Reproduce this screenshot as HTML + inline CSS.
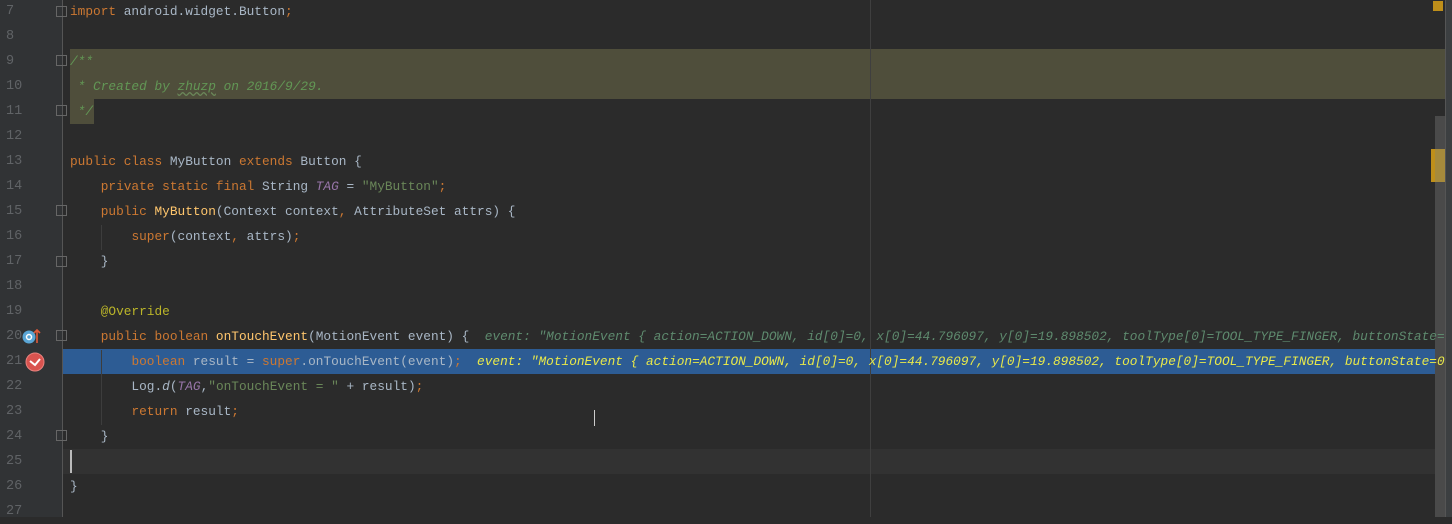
<!DOCTYPE html>
<html><head><meta charset="utf-8"><style>
*{margin:0;padding:0}
body{width:1452px;height:517px;overflow:hidden;background:#2b2b2b;position:relative;font-family:"Liberation Mono","Noto Sans CJK SC",monospace;font-size:12.8px;color:#a9b7c6}
.g{position:absolute;left:0;top:0;width:62px;height:517px;background:#313335;border-right:1px solid #3a3a3a}
.n{position:absolute;left:6px;width:20px;color:#606366;line-height:25px;font-size:13.5px}
.l{position:absolute;left:70px;white-space:pre;line-height:25px}
.k{color:#cc7832}.s{color:#6a8759}.c{color:#629755;font-style:italic}.p{color:#9876aa;font-style:italic}.a{color:#bbb529}.f{color:#ffc66d}
.h{color:#5e8a6e;font-style:italic}.hy{color:#e8e84a;font-style:italic}
.fold{position:absolute;left:56px;width:11px;height:11px;border:1px solid #666;box-sizing:border-box}
</style></head><body>
<div class="g"></div>
<div style="position:absolute;left:70px;top:49px;width:1375px;height:50px;background:#4f4e3b"></div>
<div style="position:absolute;left:70px;top:99px;width:24px;height:25px;background:#4f4e3b"></div>
<div style="position:absolute;left:62px;top:349px;width:1383px;height:25px;background:#2d5c94"></div>
<div style="position:absolute;left:62px;top:449px;width:1383px;height:25px;background:#323232"></div>
<div style="position:absolute;left:70px;top:450px;width:2px;height:23px;background:#bbb"></div>
<div style="position:absolute;left:870px;top:0;width:1px;height:517px;background:#3f3f3f"></div>
<div style="position:absolute;left:62px;top:0;width:1px;height:517px;background:#555"></div>
<div style="position:absolute;left:1435px;top:116px;width:10px;height:401px;background:#4a4a4a"></div>
<div style="position:absolute;left:1431px;top:149px;width:14px;height:33px;background:#a68a3c;border-left:4px solid #bf8f1a;box-sizing:border-box"></div>
<div style="position:absolute;left:1433px;top:1px;width:10px;height:10px;background:#bf8f1a"></div>
<div style="position:absolute;left:101px;top:225px;width:1px;height:25px;background:#3d3d3d"></div>
<div style="position:absolute;left:101px;top:350px;width:1px;height:75px;background:#3d3d3d"></div>

<div class="n" style="top:-1px">7</div><div class="n" style="top:24px">8</div><div class="n" style="top:49px">9</div><div class="n" style="top:74px">10</div><div class="n" style="top:99px">11</div><div class="n" style="top:124px">12</div><div class="n" style="top:149px">13</div><div class="n" style="top:174px">14</div><div class="n" style="top:199px">15</div><div class="n" style="top:224px">16</div><div class="n" style="top:249px">17</div><div class="n" style="top:274px">18</div><div class="n" style="top:299px">19</div><div class="n" style="top:324px">20</div><div class="n" style="top:349px">21</div><div class="n" style="top:374px">22</div><div class="n" style="top:399px">23</div><div class="n" style="top:424px">24</div><div class="n" style="top:449px">25</div><div class="n" style="top:474px">26</div><div class="n" style="top:499px">27</div>

<div class="fold" style="top:6px"></div><div class="fold" style="top:55px"></div><div class="fold" style="top:105px"></div><div class="fold" style="top:205px"></div><div class="fold" style="top:256px"></div><div class="fold" style="top:330px"></div><div class="fold" style="top:430px"></div>

<svg style="position:absolute;left:20px;top:327px" width="22" height="18"><circle cx="9" cy="10" r="6.5" fill="#5aa6d6"/><circle cx="9" cy="10" r="2.5" fill="none" stroke="#fff" stroke-width="1.5"/><path d="M17 16V3M14 6l3-3 3 3" stroke="#e05a3a" stroke-width="1.6" fill="none"/></svg>
<svg style="position:absolute;left:24px;top:351px" width="22" height="22"><circle cx="11" cy="11" r="9" fill="#d9534f" stroke="#e8837f"/><path d="M6 10l5 4 5-6" stroke="#fff" stroke-width="2" fill="none"/></svg>

<div class="l" style="top:-1px"><span class="k">import</span> android.widget.Button<span class="k">;</span></div>
<div class="l c" style="top:49px">/**</div>
<div class="l c" style="top:74px"> * Created by <u style="text-decoration:underline wavy #6a8759">zhuzp</u> on 2016/9/29.</div>
<div class="l c" style="top:99px"> */</div>
<div class="l" style="top:149px"><span class="k">public class</span> MyButton <span class="k">extends</span> Button {</div>
<div class="l" style="top:174px">    <span class="k">private static final</span> String <span class="p">TAG</span> = <span class="s">"MyButton"</span><span class="k">;</span></div>
<div class="l" style="top:199px">    <span class="k">public</span> <span class="f">MyButton</span>(Context context<span class="k">,</span> AttributeSet attrs) {</div>
<div class="l" style="top:224px">        <span class="k">super</span>(context<span class="k">,</span> attrs)<span class="k">;</span></div>
<div class="l" style="top:249px">    }</div>
<div class="l" style="top:299px">    <span class="a">@Override</span></div>
<div class="l" style="top:324px">    <span class="k">public boolean</span> <span class="f">onTouchEvent</span>(MotionEvent event) {  <span class="h">event: "MotionEvent { action=ACTION_DOWN, id[0]=0, x[0]=44.796097, y[0]=19.898502, toolType[0]=TOOL_TYPE_FINGER, buttonState=0</span></div>
<div class="l" style="top:349px">        <span class="k">boolean</span> result = <span class="k">super</span>.onTouchEvent(event)<span class="k">;</span>  <span class="hy">event: "MotionEvent { action=ACTION_DOWN, id[0]=0, x[0]=44.796097, y[0]=19.898502, toolType[0]=TOOL_TYPE_FINGER, buttonState=0</span></div>
<div class="l" style="top:374px">        Log.<i>d</i>(<span class="p">TAG</span>,<span class="s">"onTouchEvent = "</span> + result)<span class="k">;</span></div>
<div class="l" style="top:399px">        <span class="k">return</span> result<span class="k">;</span></div>
<div class="l" style="top:424px">    }</div>
<div class="l" style="top:474px">}</div>
<div style="position:absolute;left:1445px;top:0;width:7px;height:517px;background:#3c3f41;border-left:1px solid #555;box-sizing:border-box"></div>
<div style="position:absolute;left:594px;top:410px;width:1px;height:16px;background:#ccc"></div>
</body></html>
